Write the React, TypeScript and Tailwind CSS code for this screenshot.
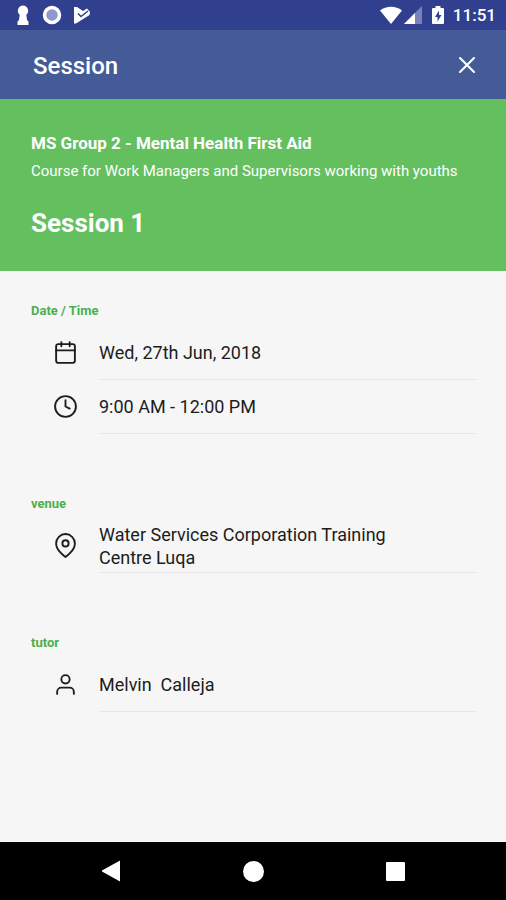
import React from 'react';
import { FiCalendar, FiClock, FiMapPin, FiUser, FiX } from 'react-icons/fi';
import type { IconType } from 'react-icons';

type Row = { icon: IconType; text: string };
type Section = { label: string; rows: Row[] };

const SECTIONS: Section[] = [
  {
    label: 'Date / Time',
    rows: [
      { icon: FiCalendar, text: 'Wed, 27th Jun, 2018' },
      { icon: FiClock, text: '9:00 AM - 12:00 PM' },
    ],
  },
  { label: 'venue', rows: [{ icon: FiMapPin, text: 'Water Services Corporation Training Centre Luqa' }] },
  { label: 'tutor', rows: [{ icon: FiUser, text: 'Melvin  Calleja' }] },
];

const StatusBar: React.FC = () => (
  <div className="flex h-[30px] items-center justify-between bg-[#313f8f] pr-[10px] pl-4 text-white">
    <div className="flex items-center gap-[10px]">
      {/* keyhole */}
      <svg width="14" height="20" viewBox="0 0 14 20" fill="currentColor" aria-hidden="true">
        <path d="M7 .5a5.300 5.300 0 0 1 3.300 9.300L11 15l1.500 1.500V20h-11v-3.500L3 15l.7-5.200A5.300 5.300 0 0 1 7 .5z" />
      </svg>
      <svg width="22" height="20" viewBox="0 0 22 20" aria-hidden="true">
        <circle cx="12" cy="10" r="7.500" fill="#8f98cc" stroke="currentColor" strokeWidth="3.500" />
      </svg>
      {/* play shape with a tick cut out of it */}
      <svg width="18" height="18" viewBox="0 0 18 18" aria-hidden="true">
        <path d="M2 1h3l6 4 4-2.500L18 6l-.5 3L4 17.500H2z" fill="currentColor" />
        <path d="M6 7.500l3 3L16 5" fill="none" stroke="#313f8f" strokeWidth="1.500" />
      </svg>
    </div>
    <div className="flex items-center">
      {/* wifi */}
      <svg width="22" height="18" viewBox="0 0 22 18" fill="currentColor" aria-hidden="true">
        <path d="M0 4.500C6.500-.5 15.500-.5 22 4.500L11 18z" />
      </svg>
      {/* cell signal */}
      <svg className="ml-[2px]" width="18" height="18" viewBox="0 0 18 18" fill="currentColor" aria-hidden="true">
        <path d="M18 0v18H0z" opacity=".35" />
        <path d="M11 7v11H0z" />
      </svg>
      {/* battery */}
      <svg className="ml-[10px]" width="12" height="18" viewBox="0 0 12 18" aria-hidden="true">
        <path d="M3.500 0h5v2H11a1 1 0 0 1 1 1v14a1 1 0 0 1-1 1H1a1 1 0 0 1-1-1V3a1 1 0 0 1 1-1h2.500z" fill="currentColor" />
        <path d="M7 4.500L3 11h2.500v4.500L9.500 9H7z" fill="#313f8f" />
      </svg>
      <span className="ml-[9px] text-[17px] leading-5 font-medium">11:51</span>
    </div>
  </div>
);

const DetailRow: React.FC<{ row: Row }> = ({ row }) => {
  const Icon = row.icon;
  return (
    <li className="flex min-h-[54px] items-stretch">
      <span className="flex w-[68px] shrink-0 items-center pb-[2px] pl-[22px]">
        <Icon size={25} strokeWidth={1.8} aria-hidden="true" />
      </span>
      <span className="flex flex-1 items-center border-b border-[#e6e6e6] pr-[70px] text-[18px] leading-[23px]">
        <span className="whitespace-pre-wrap">{row.text}</span>
      </span>
    </li>
  );
};

const NavBar: React.FC = () => (
  <nav className="flex h-[58px] items-center justify-around bg-black px-[40px] text-white">
    <button type="button" aria-label="Back" className="flex w-11 justify-center">
      <svg width="20" height="22" viewBox="0 0 20 22" fill="currentColor" aria-hidden="true">
        <path d="M19 .5v21L1 11.500v-1z" />
      </svg>
    </button>
    <button type="button" aria-label="Home" className="flex w-11 justify-center">
      <span className="size-[21px] rounded-full bg-white" />
    </button>
    <button type="button" aria-label="Recent apps" className="flex w-11 justify-center">
      <span className="size-[19px] rounded-[1px] bg-white" />
    </button>
  </nav>
);

export default function App() {
  return (
    <div className="flex min-h-screen flex-col bg-[#f6f6f6] font-['Roboto',sans-serif] text-[#1c1c1c]">
      <StatusBar />
      <header className="flex h-[69px] items-center justify-between bg-[#455b97] pr-[25px] pl-[33px] text-white">
        <h1 className="pt-[2px] text-[24px] leading-8 font-medium">Session</h1>
        <button type="button" aria-label="Close">
          <FiX size={28} strokeWidth={1.8} />
        </button>
      </header>

      <section className="bg-[#64bf5f] px-[31px] pt-8 pb-8 text-white">
        <h2 className="text-[17px] leading-6 font-bold">MS Group 2 - Mental Health First Aid</h2>
        <p className="mt-1 text-[15px] leading-6">Course for Work Managers and Supervisors working with youths</p>
        <p className="mt-6 text-[26px] leading-8 font-bold">Session 1</p>
      </section>

      <main className="flex flex-1 flex-col gap-[62px] pt-8 pr-[30px] pb-8 pl-[31px]">
        {SECTIONS.map((section) => (
          <section key={section.label}>
            <h3 className="mb-[7px] text-[13px] leading-4 font-bold text-[#4caf50]">{section.label}</h3>
            <ul>
              {section.rows.map((row) => (
                <DetailRow key={row.text} row={row} />
              ))}
            </ul>
          </section>
        ))}
      </main>

      <NavBar />
    </div>
  );
}
